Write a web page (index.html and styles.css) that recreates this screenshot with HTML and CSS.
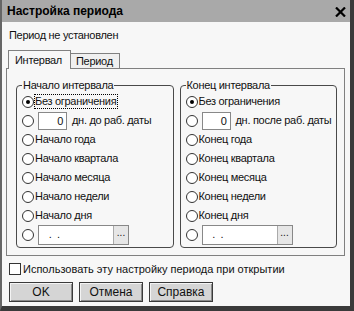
FILE: index.html
```html
<!DOCTYPE html>
<html lang="ru">
<head>
<meta charset="utf-8">
<title>Настройка периода</title>
<link rel="stylesheet" href="styles.css">
</head>
<body>
<div class="window">
  <div class="titlebar">
    <span class="title">Настройка периода</span>
    <svg class="close" width="11" height="10" viewBox="0 0 11 10"><path d="M1 0.5 L10 9.5 M10 0.5 L1 9.5" stroke="#000" stroke-width="2.2" fill="none"/></svg>
  </div>
  <div class="content">
    <div class="status">Период не установлен</div>
    <div class="tabs">
      <div class="tab active">Интервал</div>
      <div class="tab">Период</div>
    </div>
    <div class="panel">
      <fieldset class="group">
        <legend>Начало интервала</legend>
        <div class="row"><span class="radio on"></span><span class="lbl focus">Без ограничения</span></div>
        <div class="row"><span class="radio"></span><span class="num">0</span><span class="lbl after">дн. до раб. даты</span></div>
        <div class="row"><span class="radio"></span><span class="lbl">Начало года</span></div>
        <div class="row"><span class="radio"></span><span class="lbl">Начало квартала</span></div>
        <div class="row"><span class="radio"></span><span class="lbl">Начало месяца</span></div>
        <div class="row"><span class="radio"></span><span class="lbl">Начало недели</span></div>
        <div class="row"><span class="radio"></span><span class="lbl">Начало дня</span></div>
        <div class="row"><span class="radio"></span><span class="date"><span class="date-text"> .  .</span><span class="date-btn">...</span></span></div>
      </fieldset>
      <fieldset class="group">
        <legend>Конец интервала</legend>
        <div class="row"><span class="radio on"></span><span class="lbl">Без ограничения</span></div>
        <div class="row"><span class="radio"></span><span class="num">0</span><span class="lbl after">дн. после раб. даты</span></div>
        <div class="row"><span class="radio"></span><span class="lbl">Конец года</span></div>
        <div class="row"><span class="radio"></span><span class="lbl">Конец квартала</span></div>
        <div class="row"><span class="radio"></span><span class="lbl">Конец месяца</span></div>
        <div class="row"><span class="radio"></span><span class="lbl">Конец недели</span></div>
        <div class="row"><span class="radio"></span><span class="lbl">Конец дня</span></div>
        <div class="row"><span class="radio"></span><span class="date"><span class="date-text"> .  .</span><span class="date-btn">...</span></span></div>
      </fieldset>
    </div>
    <div class="check-row"><span class="checkbox"></span><span class="lbl wide">Использовать эту настройку периода при открытии</span></div>
    <div class="buttons">
      <span class="btn">OK</span>
      <span class="btn">Отмена</span>
      <span class="btn">Справка</span>
    </div>
  </div>
</div>
</body>
</html>
```
FILE: styles.css
```css
html, body {
  margin: 0;
  padding: 0;
  background: #ffffff;
}
body {
  font-family: "Liberation Sans", Arial, sans-serif;
  font-size: 11px;
  letter-spacing: -0.3px;
  color: #111;
}
.window {
  width: 354px;
  height: 311px;
  box-sizing: border-box;
  border-left: 2px solid #666;
  border-right: 4px solid #3a3a3a;
  border-bottom: 5px solid #3a3a3a;
  background: #f7f7f7;
  display: flex;
  flex-direction: column;
}
.titlebar {
  height: 22px;
  flex: none;
  background: #a9a9a9;
  display: flex;
  align-items: center;
  justify-content: space-between;
  padding: 0 4px 0 5px;
}
.title {
  font-weight: bold;
  font-size: 12px;
  letter-spacing: 0;
  color: #000;
}
.close {
  display: block;
  margin-top: 1px;
}
.content {
  padding: 0 5px 0 4px;
  display: flex;
  flex-direction: column;
}
.status {
  margin-top: 6px;
  padding-left: 3px;
  line-height: 14px;
  height: 14px;
}
.tabs {
  margin-top: 8px;
  height: 18px;
  display: flex;
  align-items: flex-end;
  padding-left: 2px;
}
.tab {
  height: 14px;
  line-height: 14px;
  padding: 0 6px 0 5px;
  border: 1px solid #808080;
  border-bottom: none;
  border-left: none;
  background: #f0f0f0;
}
.tab.active {
  height: 18px;
  line-height: 18px;
  border-left: 1px solid #808080;
  border-top-color: #808080;
  background: #f7f7f7;
  padding: 0 6px;
  margin-bottom: -1px;
  position: relative;
  z-index: 1;
  width: 49px;
}
.panel {
  box-sizing: border-box;
  border: 1px solid #808080;
  height: 188px;
  padding: 10px 7px 0 9px;
  display: grid;
  grid-template-columns: 1fr 1fr;
  column-gap: 6px;
  align-items: start;
}
.group {
  margin: 0;
  padding: 0 0 3px 5px;
  border: 1px solid #4a4a4a;
  border-radius: 4px;
  min-width: 0;
}
.group legend {
  padding: 0 1px;
  line-height: 13px;
}
.row {
  height: 19px;
  display: flex;
  align-items: center;
}
.radio {
  width: 10px;
  height: 10px;
  border: 1px solid #333;
  border-radius: 50%;
  background: #fff;
  flex: none;
  margin-right: 1px;
  display: flex;
  align-items: center;
  justify-content: center;
}
.radio.on::after {
  content: "";
  width: 4px;
  height: 4px;
  border-radius: 50%;
  background: #000;
}
.lbl {
  white-space: nowrap;
  line-height: 13px;
}
.lbl.wide {
  letter-spacing: 0;
}
.lbl.focus {
  outline: 1px dotted #000;
  outline-offset: 0;
  padding: 0 1px 0 0;
}
.num {
  width: 24px;
  height: 16px;
  border: 1px solid #888;
  background: #fff;
  margin-left: 3px;
  text-align: right;
  padding-right: 3px;
  line-height: 16px;
  flex: none;
}
.lbl.after {
  margin-left: 5px;
}
.date {
  margin-left: 3px;
  width: 89px;
  height: 18px;
  border: 1px solid #888;
  background: #fff;
  display: flex;
  flex: none;
}
.date-text {
  flex: 1;
  white-space: pre;
  line-height: 16px;
  padding-left: 7px;
}
.date-btn {
  width: 14px;
  border-left: 1px solid #aaa;
  background: #e6e6e6;
  text-align: center;
  line-height: 14px;
  font-size: 10px;
  letter-spacing: 0;
}
.check-row {
  margin-top: 6px;
  height: 14px;
  display: flex;
  align-items: center;
  padding-left: 3px;
}
.checkbox {
  width: 10px;
  height: 10px;
  border: 1px solid #333;
  background: #fff;
  margin-right: 2px;
  flex: none;
}
.buttons {
  margin-top: 6px;
  padding-left: 3px;
  display: flex;
  gap: 6px;
}
.btn {
  width: 62px;
  height: 18px;
  line-height: 18px;
  text-align: center;
  font-size: 12px;
  letter-spacing: 0;
  background: #d5d5d5;
  border: 1px solid #3a3a3a;
  box-shadow: inset 1px 1px #f4f4f4, inset -1px -1px #8a8a8a;
}
```
